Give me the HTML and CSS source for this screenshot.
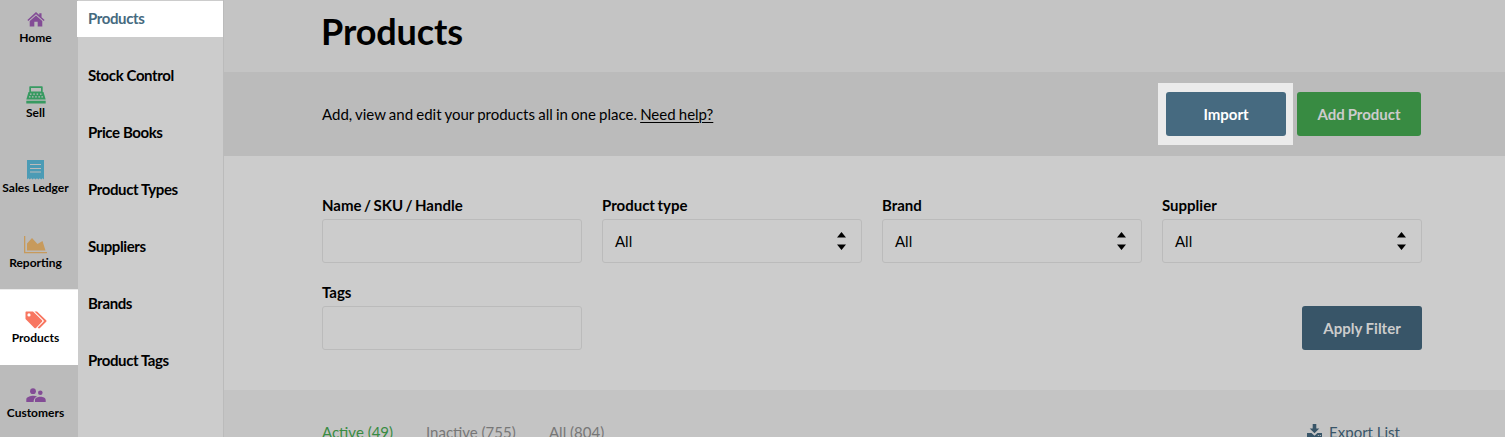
FILE: index.html
```html
<!DOCTYPE html>
<html lang="en">
<head>
<meta charset="utf-8">
<title>Products</title>
<link rel="stylesheet" href="styles.css">
</head>
<body>
<div class="app">
  <nav class="nav">
    <a class="nav-item home"><svg width="18" height="15" viewBox="0 0 19 16"><path fill="currentColor" d="M9.500 0 13 3.300V1.200h2.400v4.300L18.700 8.600 17.700 9.700 9.500 2.400 1.300 9.700.300 8.600zM9.500 3.600 16.200 9.500V15.500H11.300V10.500H7.700V15.500H2.800V9.500z"/></svg><span>Home</span></a>
    <a class="nav-item sell"><svg width="20" height="18" viewBox="0 0 20 18"><path fill="currentColor" fill-rule="evenodd" d="M4 .300H16Q16.700.300 16.700 1V6H17.500L19.700 13.500H.300L2.500 6H3.300V1Q3.300.300 4 .300zM5 2V5.500H15V2zM4 7.500v1.300h1.500V7.500zm3.300 0v1.300h1.500V7.500zm3.300 0v1.300h1.500V7.500zm3.400 0v1.300h1.500V7.500zM3 10.300v1.300h1.500v-1.300zm3 0v1.300h1.500v-1.300zm3.200 0v1.300h1.500v-1.300zm3.200 0v1.300h1.500v-1.300zm3 0v1.300h1.500v-1.300zM.300 14.800H19.700V17.500H.300z"/></svg><span>Sell</span></a>
    <a class="nav-item ledger"><svg width="17" height="20" viewBox="0 0 17 20"><path fill="currentColor" d="M0 0H17V19.500L15.600 18.300 14.200 19.500 12.800 18.300 11.400 19.500 10 18.300 8.500 19.500 7 18.300 5.600 19.500 4.200 18.300 2.800 19.500 1.400 18.300 0 19.500z"/><path stroke="#bbb" stroke-width="1.200" d="M3 4.500H14M3 8.500H14M3 12H14"/></svg><span>Sales Ledger</span></a>
    <a class="nav-item reporting"><svg width="23" height="18" viewBox="0 0 23 18"><path fill="none" stroke="currentColor" stroke-width="1.300" d="M.650 0V16.700H23"/><path fill="currentColor" d="M3 14.500V7.500L8 2 13.500 8 18.500 5 21.500 14.500z"/></svg><span>Reporting</span></a>
    <a class="nav-item products active"><svg width="22" height="18" viewBox="0 0 22 18"><path fill="currentColor" fill-rule="evenodd" d="M1.200.500H8L17 9.200Q17.800 10 17 10.800L11 16.900Q10.200 17.600 9.400 16.900L.500 8V1.200Q.500.500 1.200.500zM4 2.300A1.600 1.600 0 1 0 4 5.500 1.600 1.600 0 1 0 4 2.300z"/><path fill="currentColor" d="M9.500.500H12L21.200 9.200Q22 10 21.200 10.800L15 17Q14 17.800 13 16.900L12.700 16.600 18.500 10.700Q19.200 10 18.500 9.200z"/></svg><span>Products</span></a>
    <a class="nav-item customers"><svg width="20" height="15" viewBox="0 0 20 15"><g fill="currentColor"><circle cx="7" cy="3.200" r="2.900"/><circle cx="14.300" cy="4.700" r="2.300"/><path d="M.300 14V11.500C.300 9 4.500 7.800 7.500 7.800 8.800 7.800 10 8 11 8.500 8.500 9.700 7.600 11.200 7.600 14zM9 14V12C9 10 12 8.800 14.500 8.800S19.700 10 19.700 12V14z"/></g></svg><span>Customers</span></a>
  </nav>
  <nav class="subnav">
    <a class="sub-item current">Products</a>
    <a class="sub-item">Stock Control</a>
    <a class="sub-item">Price Books</a>
    <a class="sub-item">Product Types</a>
    <a class="sub-item">Suppliers</a>
    <a class="sub-item">Brands</a>
    <a class="sub-item">Product Tags</a>
  </nav>
  <main class="main">
    <header class="title-bar"><h1>Products</h1></header>
    <section class="action-bar">
      <p class="intro">Add, view and edit your products all in one place. <a class="help">Need help?</a></p>
      <div class="highlight"><button class="btn import">Import</button></div>
      <button class="btn add">Add Product</button>
    </section>
    <section class="filters">
      <div class="field"><label>Name / SKU / Handle</label><div class="control"></div></div>
      <div class="field"><label>Product type</label><div class="control"><span>All</span><svg width="9" height="18" viewBox="0 0 9 18"><path d="M0 5.500 4.500 0 9 5.500zM0 12.500H9L4.500 18z"/></svg></div></div>
      <div class="field"><label>Brand</label><div class="control"><span>All</span><svg width="9" height="18" viewBox="0 0 9 18"><path d="M0 5.500 4.500 0 9 5.500zM0 12.500H9L4.500 18z"/></svg></div></div>
      <div class="field"><label>Supplier</label><div class="control"><span>All</span><svg width="9" height="18" viewBox="0 0 9 18"><path d="M0 5.500 4.500 0 9 5.500zM0 12.500H9L4.500 18z"/></svg></div></div>
      <div class="field"><label>Tags</label><div class="control"></div></div>
      <button class="btn apply">Apply Filter</button>
    </section>
    <section class="tabs">
      <a class="tab selected">Active (49)</a>
      <a class="tab inactive">Inactive (755)</a>
      <a class="tab all">All (804)</a>
      <a class="export"><svg width="15" height="15" viewBox="0 0 15 15"><path fill="currentColor" fill-rule="evenodd" d="M5.700 0H9.300V4.500H12.300L7.500 9.300 2.700 4.500H5.700zM0 9H4.500L7.500 11.800 10.500 9H15V14H0zM10.800 11v1h1v-1zm2 0v1h1v-1z"/></svg><span>Export List</span></a>
    </section>
  </main>
</div>
</body>
</html>
```
FILE: styles.css
```css
* { box-sizing: border-box; }
body { margin: 0; font-family: Lato, sans-serif; font-size: 15px; color: #000; background: #ccc; overflow: hidden; }
.app { display: flex; height: 437px; overflow: hidden; }
.nav { width: 78px; flex: none; background: #bbb; overflow: hidden; }
.nav-item { height: 75px; display: flex; flex-direction: column; align-items: center; justify-content: flex-end; padding: 0 7px 18px 0; font-size: 12px; font-weight: 700; line-height: 18px; }
.nav-item:first-child { margin-top: -10px; }
.nav-item span { color: #000; white-space: nowrap; }
.nav-item svg { display: block; flex: none; }
.home { color: #834c96; }
.home svg { margin-bottom: 2px; }
.sell { color: #379a61; }
.ledger { color: #4b9bb5; }
.ledger svg { margin-bottom: -1px; }
.reporting { color: #c79a5c; }
.products { color: #f87660; }
.customers { color: #834c96; }
.customers svg { margin-bottom: 1px; }
.nav-item.active { background: #fff; box-shadow: 0 -1px 0 #ebebeb; }
.subnav { width: 146px; flex: none; border-right: 1px solid #bbb; padding-top: 1px; display: flex; flex-direction: column; gap: 21px; }
.sub-item { height: 36px; flex: none; padding-left: 10px; line-height: 35px; font-size: 15px; letter-spacing: -0.4px; font-weight: 700; }
.sub-item.current { background: #fff; color: #466a80; margin-left: -1px; padding-left: 11px; }
.main { flex: 1; min-width: 0; }
.title-bar { height: 72px; background: #c4c4c4; padding: 9px 0 0 97px; }
h1 { margin: 0; font-size: 36px; line-height: 44px; font-weight: 700; letter-spacing: -0.1px; }
.action-bar { height: 84px; background: #bbb; display: flex; align-items: center; padding: 0 84px 0 98px; }
.intro { margin: 0; flex: 1; word-spacing: -0.65px; }
.help { text-decoration: underline; text-underline-offset: 2px; text-decoration-thickness: 1px; }
.highlight { background: #ebebeb; padding: 9px 7px 9px 8px; margin-right: 4px; }
.btn { display: block; border: 0; border-radius: 3px; height: 44px; padding: 0; font: 700 15px Lato, sans-serif; color: #ccc; text-align: center; }
.import { width: 120px; background: #466a80; color: #fff; }
.add { width: 124px; background: #388b42; word-spacing: -0.7px; }
.filters { height: 234px; padding: 38px 83px 0 98px; display: grid; grid-template-columns: repeat(4, 260px); grid-template-rows: 69px 69px; gap: 18px 20px; }
.field label { display: block; height: 25px; line-height: 22px; font-weight: 700; word-spacing: -1.2px; }
.control { height: 44px; border: 1px solid #bbb; border-radius: 3px; padding: 0 15px 0 12px; display: flex; align-items: center; justify-content: space-between; }
.apply { grid-column: 4; justify-self: end; align-self: end; width: 120px; background: #385568; }
.tabs { height: 47px; background: #c4c4c4; padding: 32px 105px 0 98px; display: flex; line-height: 20px; color: #777; overflow: hidden; }
.tab { white-space: nowrap; }
.selected { color: #388b42; width: 104px; }
.inactive { width: 123px; }
.export { margin-left: auto; display: flex; gap: 7px; color: #385568; }
.export svg { margin-top: 2px; }
```
